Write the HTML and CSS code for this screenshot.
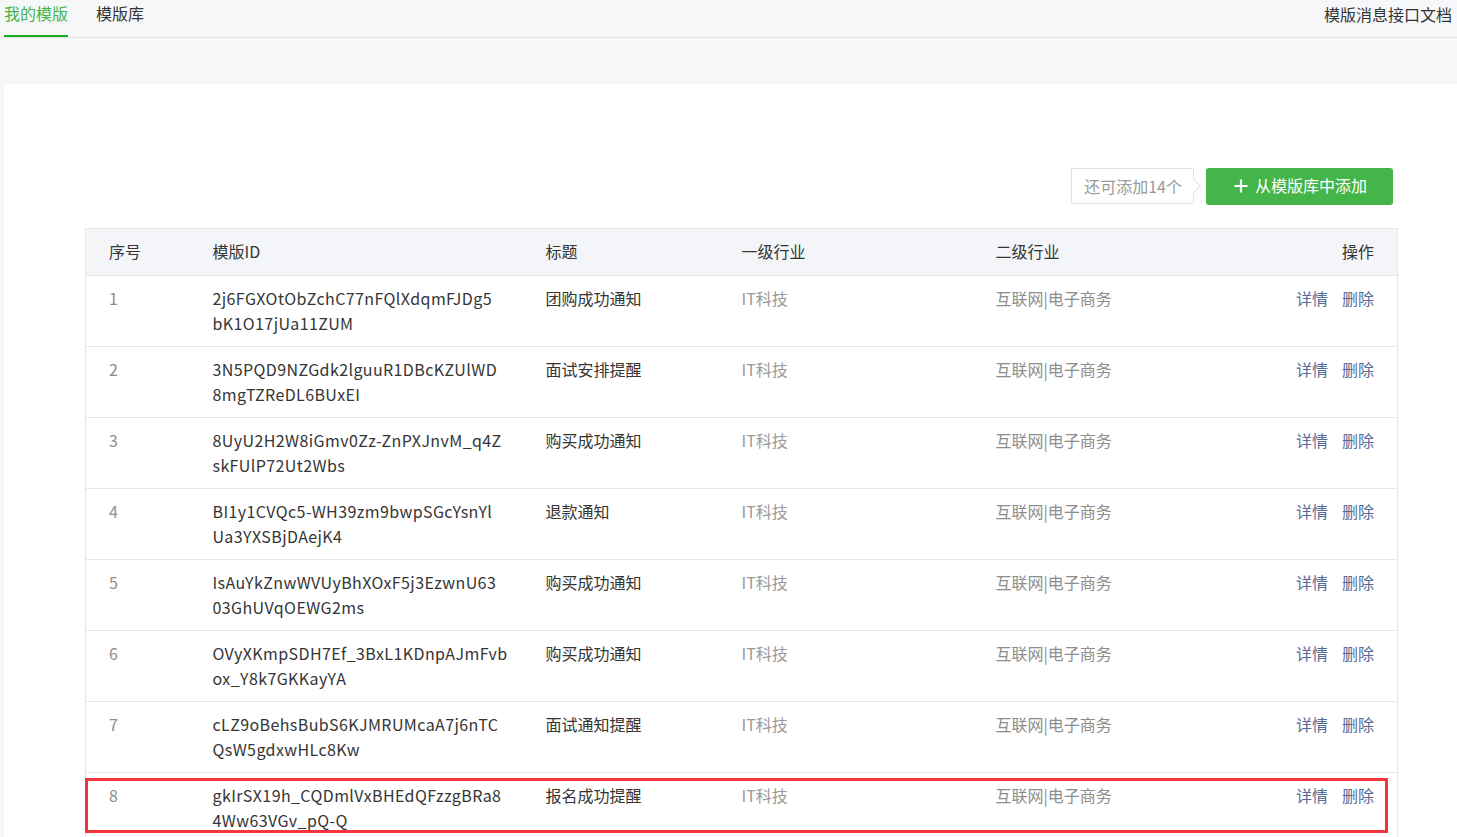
FILE: index.html
```html
<!DOCTYPE html>
<html lang="zh-CN">
<head>
<meta charset="utf-8">
<title>我的模版</title>
<link rel="stylesheet" href="styles.css">
</head>
<body>
<div class="topbar">
  <div class="tabs">
    <a class="tab active">我的模版</a>
    <a class="tab">模版库</a>
  </div>
  <a class="doc-link">模版消息接口文档</a>
</div>
<div class="card">
  <div class="toolbar">
    <div class="quota">还可添加14个<span class="pointer"></span></div>
    <button class="add-btn"><svg class="plus" width="14" height="14" viewBox="0 0 14 14"><path d="M7 0.5V13.5M0.5 7H13.5" stroke="#fff" stroke-width="2.2" fill="none"/></svg>从模版库中添加</button>
  </div>
  <div class="table-wrap">
    <table class="tpl-table">
      <colgroup>
        <col class="c-no"><col class="c-id"><col class="c-title"><col class="c-ind1"><col class="c-ind2"><col class="c-op">
      </colgroup>
      <thead>
        <tr><th>序号</th><th>模版ID</th><th>标题</th><th>一级行业</th><th>二级行业</th><th class="op">操作</th></tr>
      </thead>
      <tbody>
        <tr><td class="no">1</td><td class="id">2j6FGXOtObZchC77nFQlXdqmFJDg5<br>bK1O17jUa11ZUM</td><td class="title">团购成功通知</td><td class="ind1">IT科技</td><td class="ind2">互联网|电子商务</td><td class="op"><a>详情</a><a>删除</a></td></tr>
        <tr><td class="no">2</td><td class="id">3N5PQD9NZGdk2lguuR1DBcKZUlWD<br>8mgTZReDL6BUxEI</td><td class="title">面试安排提醒</td><td class="ind1">IT科技</td><td class="ind2">互联网|电子商务</td><td class="op"><a>详情</a><a>删除</a></td></tr>
        <tr><td class="no">3</td><td class="id">8UyU2H2W8iGmv0Zz-ZnPXJnvM_q4Z<br>skFUlP72Ut2Wbs</td><td class="title">购买成功通知</td><td class="ind1">IT科技</td><td class="ind2">互联网|电子商务</td><td class="op"><a>详情</a><a>删除</a></td></tr>
        <tr><td class="no">4</td><td class="id">BI1y1CVQc5-WH39zm9bwpSGcYsnYl<br>Ua3YXSBjDAejK4</td><td class="title">退款通知</td><td class="ind1">IT科技</td><td class="ind2">互联网|电子商务</td><td class="op"><a>详情</a><a>删除</a></td></tr>
        <tr><td class="no">5</td><td class="id">IsAuYkZnwWVUyBhXOxF5j3EzwnU63<br>03GhUVqOEWG2ms</td><td class="title">购买成功通知</td><td class="ind1">IT科技</td><td class="ind2">互联网|电子商务</td><td class="op"><a>详情</a><a>删除</a></td></tr>
        <tr><td class="no">6</td><td class="id">OVyXKmpSDH7Ef_3BxL1KDnpAJmFvb<br>ox_Y8k7GKKayYA</td><td class="title">购买成功通知</td><td class="ind1">IT科技</td><td class="ind2">互联网|电子商务</td><td class="op"><a>详情</a><a>删除</a></td></tr>
        <tr><td class="no">7</td><td class="id">cLZ9oBehsBubS6KJMRUMcaA7j6nTC<br>QsW5gdxwHLc8Kw</td><td class="title">面试通知提醒</td><td class="ind1">IT科技</td><td class="ind2">互联网|电子商务</td><td class="op"><a>详情</a><a>删除</a></td></tr>
        <tr class="marked"><td class="no">8</td><td class="id">gkIrSX19h_CQDmlVxBHEdQFzzgBRa8<br>4Ww63VGv_pQ-Q</td><td class="title">报名成功提醒</td><td class="ind1">IT科技</td><td class="ind2">互联网|电子商务</td><td class="op"><a>详情</a><a>删除</a></td></tr>
      </tbody>
    </table>
    <div class="highlight"></div>
  </div>
</div>
</body>
</html>
```
FILE: styles.css
```css
html, body {
  margin: 0;
  padding: 0;
  overflow: hidden;
}
body {
  background: #f6f7f9;
  font-family: "Noto Sans CJK SC", "Noto Sans", sans-serif;
  font-size: 16px;
  color: #353535;
  width: 1457px;
  height: 837px;
}
.topbar {
  display: flex;
  justify-content: space-between;
  align-items: flex-start;
  height: 37px;
  border-bottom: 1px solid #e0e1e3;
  padding: 0 5px 0 4px;
}
.tabs {
  display: flex;
  gap: 28px;
}
.tab {
  display: block;
  height: 35px;
  line-height: 27px;
  font-size: 16px;
  color: #353535;
  border-bottom: 2px solid transparent;
}
.tab.active {
  color: #44b549;
  border-bottom-color: #1aad19;
}
.doc-link {
  line-height: 29px;
  color: #353535;
}
.card {
  margin: 46px 0 0 4px;
  background: #fff;
  padding: 84px 59px 0 81px;
  height: 700px;
}
.toolbar {
  display: flex;
  justify-content: flex-end;
  align-items: flex-start;
  gap: 12px;
  padding-right: 5px;
  margin-bottom: 23px;
}
.quota {
  position: relative;
  height: 34px;
  line-height: 34px;
  padding: 0 11px 0 12px;
  border: 1px solid #e4e4e4;
  color: #9a9a9a;
  font-size: 16px;
  box-sizing: content-box;
}
.pointer {
  position: absolute;
  right: -6px;
  top: 12px;
  width: 9px;
  height: 9px;
  background: #fff;
  border-top: 1px solid #e4e4e4;
  border-right: 1px solid #e4e4e4;
  transform: rotate(45deg);
}
.add-btn {
  height: 37px;
  width: 187px;
  border: none;
  border-radius: 3px;
  background: #44b549;
  color: #fff;
  font-family: inherit;
  font-size: 16px;
  line-height: 35px;
  display: flex;
  align-items: center;
  justify-content: center;
  gap: 7px;
  padding: 0 0 2px 2px;
}
.plus {
  display: block;
  flex: none;
  margin-top: 1px;
}
.table-wrap {
  position: relative;
}
.tpl-table {
  width: 100%;
  border-collapse: collapse;
  border: 1px solid #e7e7eb;
  table-layout: fixed;
}
.c-no { width: 127px; }
.c-id { width: 333px; }
.c-title { width: 196px; }
.c-ind1 { width: 254px; }
.c-ind2 { width: 250px; }
.tpl-table th {
  background: #f4f5f9;
  font-weight: normal;
  text-align: left;
  height: 44px;
  padding: 0 0 2px 0;
  color: #353535;
  border-bottom: 1px solid #e7e7eb;
}
.tpl-table th:first-child,
.tpl-table td:first-child {
  padding-left: 23px;
}
.tpl-table th.op,
.tpl-table td.op {
  text-align: right;
  padding-right: 23px;
}
.tpl-table td {
  vertical-align: top;
  padding: 10px 0 0 0;
  height: 60px;
  line-height: 25px;
  border-bottom: 1px solid #e7e7eb;
}
.tpl-table td.id {
  white-space: nowrap;
  padding-right: 20px;
  letter-spacing: 0.4px;
}
.no { color: #8d8d8d; }
.ind1 { color: #9a9a9a; }
.ind2 { color: #8d8d8d; }
.op a {
  color: #576b95;
  margin-left: 14px;
}
.highlight {
  position: absolute;
  left: 0;
  top: 550px;
  width: 1297px;
  height: 49px;
  border: 3px solid #f4333c;
}
```
